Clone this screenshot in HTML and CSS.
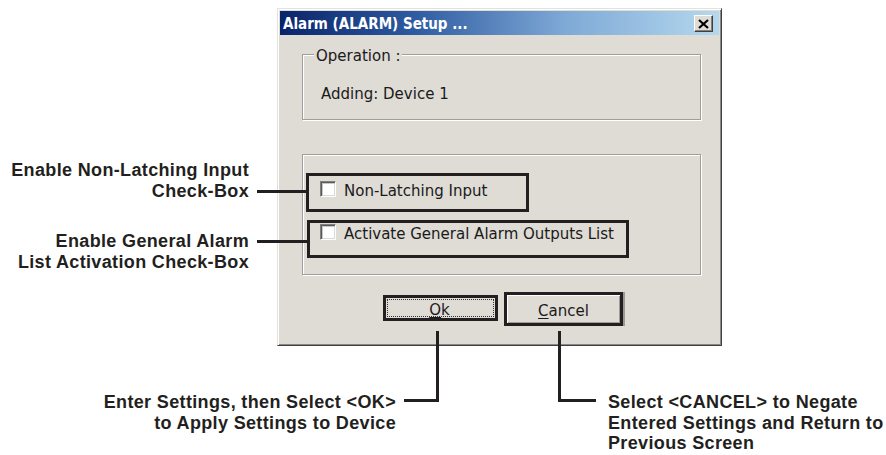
FILE: index.html
```html
<!DOCTYPE html>
<html lang="en">
<head>
<meta charset="utf-8">
<title>Alarm (ALARM) Setup</title>
<link rel="stylesheet" href="styles.css">
</head>
<body>
<div class="page">
  <div class="dialog">
    <div class="titlebar">
      <span class="title">Alarm (ALARM) Setup ...</span>
      <span class="close">
        <svg width="11" height="10" viewBox="0 0 11 10"><path d="M1 1 L10 9 M10 1 L1 9" stroke="#000" stroke-width="2.2" fill="none"/></svg>
      </span>
    </div>
    <div class="body">
      <div class="group group-op">
        <span class="legend">Operation :</span>
        <div class="op-text">Adding: Device 1</div>
      </div>
      <div class="group group-opts">
        <div class="callout callout-1">
          <span class="check"></span>
          <span class="check-label">Non-Latching Input</span>
        </div>
        <div class="callout callout-2">
          <span class="check"></span>
          <span class="check-label">Activate General Alarm Outputs List</span>
        </div>
      </div>
      <div class="buttons">
        <div class="btn btn-ok"><span class="focus"><u>O</u>k</span></div>
        <div class="callout-btn"><div class="btn btn-cancel"><u>C</u>ancel</div></div>
      </div>
    </div>
  </div>

  <svg class="leaders" width="886" height="455" viewBox="0 0 886 455">
    <g stroke="#231f20" stroke-width="3" fill="none">
      <path d="M257 191.5 H307"/>
      <path d="M257 241.5 H308"/>
      <path d="M437.5 331 V400.5 H404"/>
      <path d="M559.5 331 V400.5 H596"/>
    </g>
  </svg>

  <div class="note note-1">Enable Non-Latching Input<br>Check-Box</div>
  <div class="note note-2">Enable General Alarm<br>List Activation Check-Box</div>
  <div class="note note-3">Enter Settings, then Select &lt;OK&gt;<br>to Apply Settings to Device</div>
  <div class="note note-4">Select &lt;CANCEL&gt; to Negate<br>Entered Settings and Return to<br>Previous Screen</div>
</div>
</body>
</html>
```

FILE: styles.css
```css
* { box-sizing: border-box; }

html, body {
  margin: 0;
  padding: 0;
  background: #fff;
}

.page {
  position: relative;
  width: 886px;
  height: 455px;
  padding-top: 8px;
  overflow: hidden;
  background: #fff;
}

.dialog {
  margin-left: 277px;
  width: 445px;
  height: 338px;
  background: #dfdbd5;
  border: 1px solid;
  border-color: #e4e1dc #3c4148 #3c4148 #e4e1dc;
  box-shadow: inset 1px 1px 0 #ffffff, inset -1px -1px 0 #8a8883;
  padding: 2px;
  font-family: "DejaVu Sans", Verdana, sans-serif;
  font-size: 15px;
  color: #1a1a1a;
}

.titlebar {
  height: 24px;
  background: linear-gradient(to right, #0a246a 0%, #2d5aa0 30%, #7fa9d6 65%, #b4d8ee 100%);
  display: flex;
  align-items: center;
  justify-content: space-between;
  padding: 0 6px 0 3px;
}

.title {
  font-family: "DejaVu Sans Condensed", "DejaVu Sans", sans-serif;
  font-stretch: condensed;
  font-weight: bold;
  font-size: 15px;
  color: #fff;
  line-height: 18px;
  padding-top: 1px;
}

.close {
  width: 19px;
  height: 17px;
  background: #dfdbd5;
  border: 1px solid;
  border-color: #fff #404040 #404040 #fff;
  box-shadow: inset -1px -1px 0 #808080;
  display: flex;
  align-items: center;
  justify-content: center;
  margin-top: 1px;
}

.close svg { display: block; }

.body {
  padding: 19px 0 0 22px;
}

.group {
  width: 399px;
  border: 1px solid #a19d98;
  box-shadow: 1px 1px 0 #fff, inset 1px 1px 0 #fff;
}

.group-op {
  height: 66px;
}

.legend {
  display: block;
  width: fit-content;
  margin: -7px 0 0 11px;
  padding: 0 2px;
  line-height: 17px;
  background: #dfdbd5;
}

.op-text {
  margin: 21px 0 0 18px;
  line-height: 17px;
}

.group-opts {
  margin-top: 34px;
  height: 121px;
  padding: 18px 0 0 3px;
}

.callout {
  border: 3px solid #231f20;
  display: flex;
  align-items: center;
  gap: 8px;
  line-height: 17px;
}

.callout-1 {
  width: 223px;
  height: 39px;
  align-items: flex-start;
  padding: 5px 0 0 11px;
}

.callout-2 {
  margin: 8px 0 0 1px;
  width: 322px;
  height: 38px;
  align-items: flex-start;
  padding: 1px 0 0 10px;
}

.check {
  flex: none;
  width: 16px;
  height: 16px;
  background: #fff;
  border: 1px solid;
  border-color: #808080 #fff #fff #808080;
  box-shadow: inset 1px 1px 0 #5a5a5a, inset 2px 2px 0 #c8c8c8, inset -1px -1px 0 #dcd8d2;
}

.check-label {
  line-height: 16px;
  padding-top: 2px;
}

.buttons {
  display: flex;
  align-items: flex-start;
  margin-top: 17px;
  padding-left: 81px;
}

.btn {
  display: flex;
  align-items: center;
  justify-content: center;
  line-height: 17px;
}

.btn-ok {
  margin-top: 3px;
  width: 115px;
  height: 26px;
  border: 3px solid #231f20;
  padding: 1px;
}

.focus {
  flex: 1;
  align-self: stretch;
  border: 1px dotted #333;
  display: flex;
  align-items: center;
  justify-content: center;
  padding: 4px 2px 0 0;
}

.callout-btn {
  margin-left: 6px;
  width: 119px;
  height: 34px;
  border: 3px solid #231f20;
  box-shadow: 2px 0 0 0 #9c9893;
}

.btn-cancel {
  height: 100%;
  box-shadow: inset 1px 1px 0 #fff, inset -1px -1px 0 #a09c97;
  padding-top: 4px;
}

.btn u { text-decoration-thickness: 1px; text-underline-offset: 2px; }

.leaders {
  position: absolute;
  left: 0;
  top: 0;
  pointer-events: none;
}

.note {
  position: absolute;
  font-family: "Liberation Sans", Arial, Helvetica, sans-serif;
  font-weight: bold;
  font-size: 18px;
  letter-spacing: 0.35px;
  line-height: 20.5px;
  color: #231f20;
  white-space: nowrap;
}

.note-1 { top: 160px; right: 637px; text-align: right; }
.note-2 { top: 231px; right: 637px; text-align: right; }
.note-3 { top: 392px; right: 490px; text-align: right; }
.note-4 { top: 392px; left: 608px; text-align: left; }
```
